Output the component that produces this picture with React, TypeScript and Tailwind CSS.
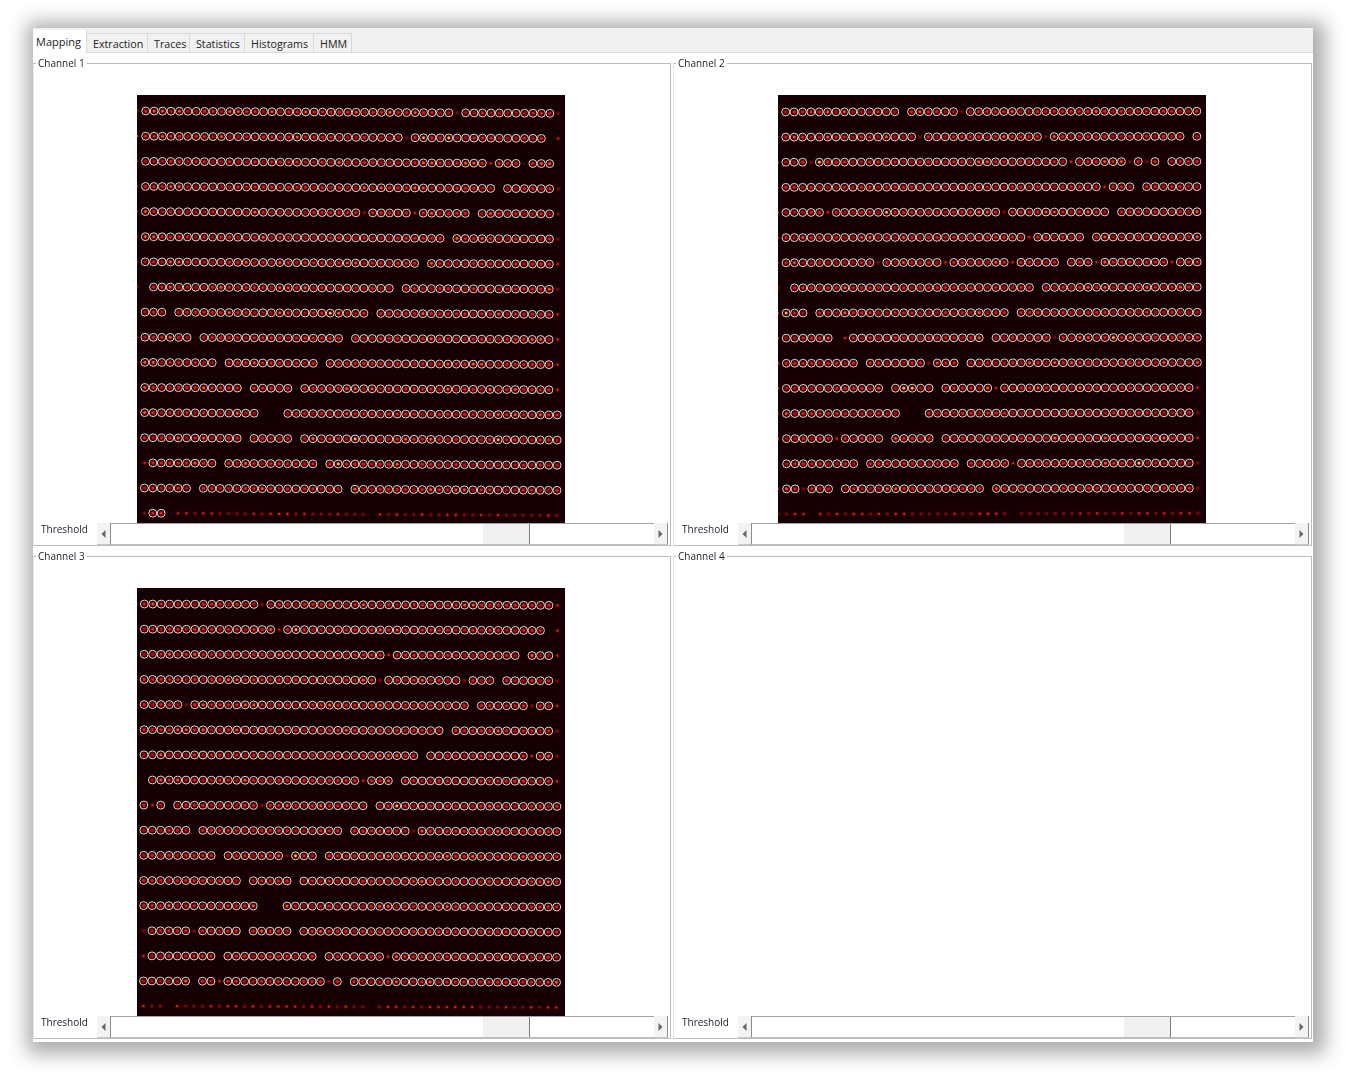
const tabs = [
  { name: "Extraction", width: "w-[61px]" },
  { name: "Traces", width: "w-[42px]" },
  { name: "Statistics", width: "w-[55px]" },
  { name: "Histograms", width: "w-[69px]" },
  { name: "HMM", width: "w-[38px]" },
];

// one string per spot row: "a-b" = circled spots in columns a..b, ".a-b" = spots the mapping missed
const channel1 = [
  ".0 1-37 .38 39-49 .50",
  ".0 1-31 .32 33-48 .50",
  ".0 1-41 .42 43-45 47-49",
  ".0 1-42 44-49 .50",
  ".0 1-26 .27 28-32 .33 34-39 41-49 .50",
  ".0 1-36 38-49 .50",
  ".0 1-33 35-49 .50",
  ".0 2-30 32-49 .50",
  "1-3 5-27 29-49 .50",
  ".0 1-6 8-24 26-49 .50",
  ".0 1-9 11-21 23-49 .50",
  "1-12 14-18 20-49 .50",
  "1-14 18-50",
  ".0 1-12 14-18 20-50",
  ".1 2-9 11-21 23-50",
  ".0 1-6 8-24 26-50",
  ".1 2-3 .5-27 .29-50",
];

const channel2 = [
  ".0 1-14 16-21 .22 23-50",
  ".0 1-16 .17 18-31 .32 33-48 50",
  ".0 1-3 .4 5-34 .35 36-41 .42 43 .44 45 47-50",
  ".0 1-38 .39 40-42 44-50",
  ".0 1-5 .6 7-26 .27 28-39 41-50",
  ".0 1-29 .30 31-36 38-50",
  ".0 1-11 .12 13-19 .20 21-27 .28 29-33 35-37 .38 39-46 .47 48-50",
  ".0 2-30 32-50",
  ".0 1-3 5-27 29-50",
  ".0 1-6 .8 9-24 26-32 .33 34-50",
  ".0 1-9 11-17 .18 19-21 23-50",
  ".0 1-12 14-18 20-25 .26 27-49 .50",
  ".0 1-14 18-49 .50",
  ".0 1-6 .7 8-12 14-18 20-49 .50",
  "1-9 11-21 23-27 .28 29-49 .50",
  ".0 1-2 .3 4-6 8-24 26-49 .50",
  ".0 .1-3 .5-27 .29-50",
];

const channel3 = [
  ".0 1-14 .15 16-49 .50",
  ".0 1-16 .17 18-48 .50",
  ".0 1-29 .30 31-45 47-49 .50",
  ".0 1-28 .29 30-38 .39 40-42 44-49 .50",
  ".0 1-5 .6 7-39 41-46 .47 48-49 .50",
  ".0 1-36 38-49 .50",
  "1-33 35-46 .47 48-49 .50",
  ".0 2-26 .27 28-30 32-49 .50",
  ".0 1 .2 3 5-14 .15 16-27 29-50",
  ".0 1-6 8-24 26-32 .33 34-50",
  ".0 1-9 11-17 .18 19-21 23-50",
  "1-12 14-18 20-50",
  "1-14 18-50",
  ".0 .1 2-6 .7 8-12 14-18 20-50",
  ".1 2-9 11-21 23-29 .30 31-50",
  ".0 1-6 8-9 .10 11-22 .23 24 26-50",
  ".0 .1-3 .5-27 .29-50",
];

type Grid = { x0: number; y0: number; pitch: number; tilt: number; shear: number; seed: number };

const grid1: Grid = { x0: 0.3, y0: 16, pitch: 8.42, tilt: 2.4, shear: -1.4, seed: 1 };
const grid2: Grid = { x0: -0.7, y0: 17, pitch: 8.39, tilt: -0.8, shear: 1, seed: 2 };
const grid3: Grid = { x0: -1.1, y0: 16, pitch: 8.43, tilt: 1.4, shear: -0.9, seed: 3 };

function hash(a: number, b: number, seed: number) {
  const n = Math.sin(a * 12.9898 + b * 78.233 + seed * 37.719) * 43758.5453;
  return n - Math.floor(n);
}

function spotColor(h: number) {
  if (h > 0.988) return "#ffd23a";
  if (h > 0.88) return "#ff5a14";
  if (h > 0.35) return "#f01a10";
  return "#b80c08";
}

function SpotRow({ row, index, grid }: { row: string; index: number; grid: Grid }) {
  const spots: { col: number; ring: boolean }[] = [];
  row.split(" ").forEach((part) => {
    const ring = !part.startsWith(".");
    const [from, to] = part.replace(".", "").split("-").map(Number);
    for (let col = from; col <= (to ?? from); col++) spots.push({ col, ring });
  });

  return (
    <g>
      {spots.map(({ col, ring }) => {
        const x = grid.x0 + (grid.shear * index) / 16 + col * grid.pitch;
        const y = grid.y0 + index * 25.13 + (grid.tilt * col) / 50;
        const h = hash(col, index, grid.seed);
        if (!ring) {
          return (
            <g key={col}>
              <circle cx={x} cy={y} r={2.2} fill="#4e0000" />
              <circle cx={x} cy={y} r={1.1} fill={h > 0.5 ? "#f02010" : "#900a06"} />
            </g>
          );
        }
        return (
          <g key={col}>
            <circle cx={x} cy={y} r={3.95} fill="#2c0000" stroke="#dcd8d8" strokeWidth={1} />
            <circle cx={x} cy={y} r={2.3} fill="#7c0202" />
            <circle cx={x} cy={y} r={1.35} fill={spotColor(h)} />
          </g>
        );
      })}
    </g>
  );
}

function SpotImage({ rows, grid }: { rows: string[]; grid: Grid }) {
  return (
    <svg width={428} height={428} viewBox="0 0 428 428" className="block bg-[#170003]">
      {rows.map((row, i) => (
        <SpotRow key={i} row={row} index={i} grid={grid} />
      ))}
    </svg>
  );
}

function ScrollArrow({ right }: { right?: boolean }) {
  return (
    <div className="w-[14px] h-full flex items-center justify-center bg-[#f3f3f3] border-r border-b border-r-[#8c8c8c] border-b-[#c8c8c8]">
      <svg width="5" height="8" viewBox="0 0 5 8">
        <polygon points={right ? "0.5,0 4.5,4 0.5,8" : "4.5,0 0.5,4 4.5,8"} fill="#666" />
      </svg>
    </div>
  );
}

function Channel({
  name,
  rows,
  grid,
  imageOffset,
  labelBox,
  className,
}: {
  name: string;
  rows?: string[];
  grid?: Grid;
  imageOffset: string;
  labelBox: string;
  className: string;
}) {
  return (
    <div className="h-[493px] pt-[3px]">
      <fieldset className={`h-[490px] border border-[#bcbcbc] border-l-[#e6e6e6] ${className}`}>
        <legend className="ml-[2px] px-[2px] h-[14px] text-[10px] leading-[14px] text-[#1a1f2a]">{name}</legend>
        <div className={`mt-[25px] h-[428px] ${imageOffset}`}>
          {rows && grid && <SpotImage rows={rows} grid={grid} />}
        </div>
        <div className="h-[22px] flex">
          <div className={`text-[10px] leading-[13px] text-[#1a1f2a] ${labelBox}`}>Threshold</div>
          <div className="w-[571px] h-full flex">
            <ScrollArrow />
            <div className="flex-1 flex bg-white border-t border-b border-t-[#a2a2a2] border-b-[#bdbdbd]">
              <div className="w-[372px]" />
              <div className="w-[47px] bg-[#f0f0f0] border-r border-[#7c7c7c]" />
            </div>
            <ScrollArrow right />
          </div>
        </div>
      </fieldset>
    </div>
  );
}

export default function App() {
  return (
    <div className="min-h-screen bg-white pt-[28px] pl-[33px] font-['Open_Sans',sans-serif]">
      <div className="w-[1280px] h-[1014px] bg-white shadow-[3px_3px_18px_9px_rgba(0,0,0,0.33)]">
        <div className="blur-[0.3px]">
          {/* Tab strip */}
          <div className="h-[25px] flex items-end bg-[#f1f1f1] border-b border-[#d9d9d9]">
            <div className="w-[54px] h-[23px] -mb-px bg-white border-r border-[#d9d9d9] pl-[3px] text-[11px] leading-[23px] text-[#222]">
              Mapping
            </div>
            {tabs.map((tab) => (
              <div
                key={tab.name}
                className={`h-[19px] pl-[6px] border-t border-r border-[#d9d9d9] text-[10.7px] leading-[20px] text-[#222] ${tab.width}`}
              >
                {tab.name}
              </div>
            ))}
          </div>

          <div className="grid grid-cols-2">
            <Channel name="Channel 1" rows={channel1} grid={grid1} imageOffset="ml-[103px]" labelBox="w-[63px] pl-[7px]" className="mr-[2px]" />
            <Channel name="Channel 2" rows={channel2} grid={grid2} imageOffset="ml-[104px]" labelBox="w-[64px] pl-[8px]" className="mr-px" />
            <Channel name="Channel 3" rows={channel3} grid={grid3} imageOffset="ml-[103px]" labelBox="w-[63px] pl-[7px]" className="mr-[2px]" />
            <Channel name="Channel 4" imageOffset="ml-[104px]" labelBox="w-[64px] pl-[8px]" className="mr-px" />
          </div>
        </div>
      </div>
    </div>
  );
}
